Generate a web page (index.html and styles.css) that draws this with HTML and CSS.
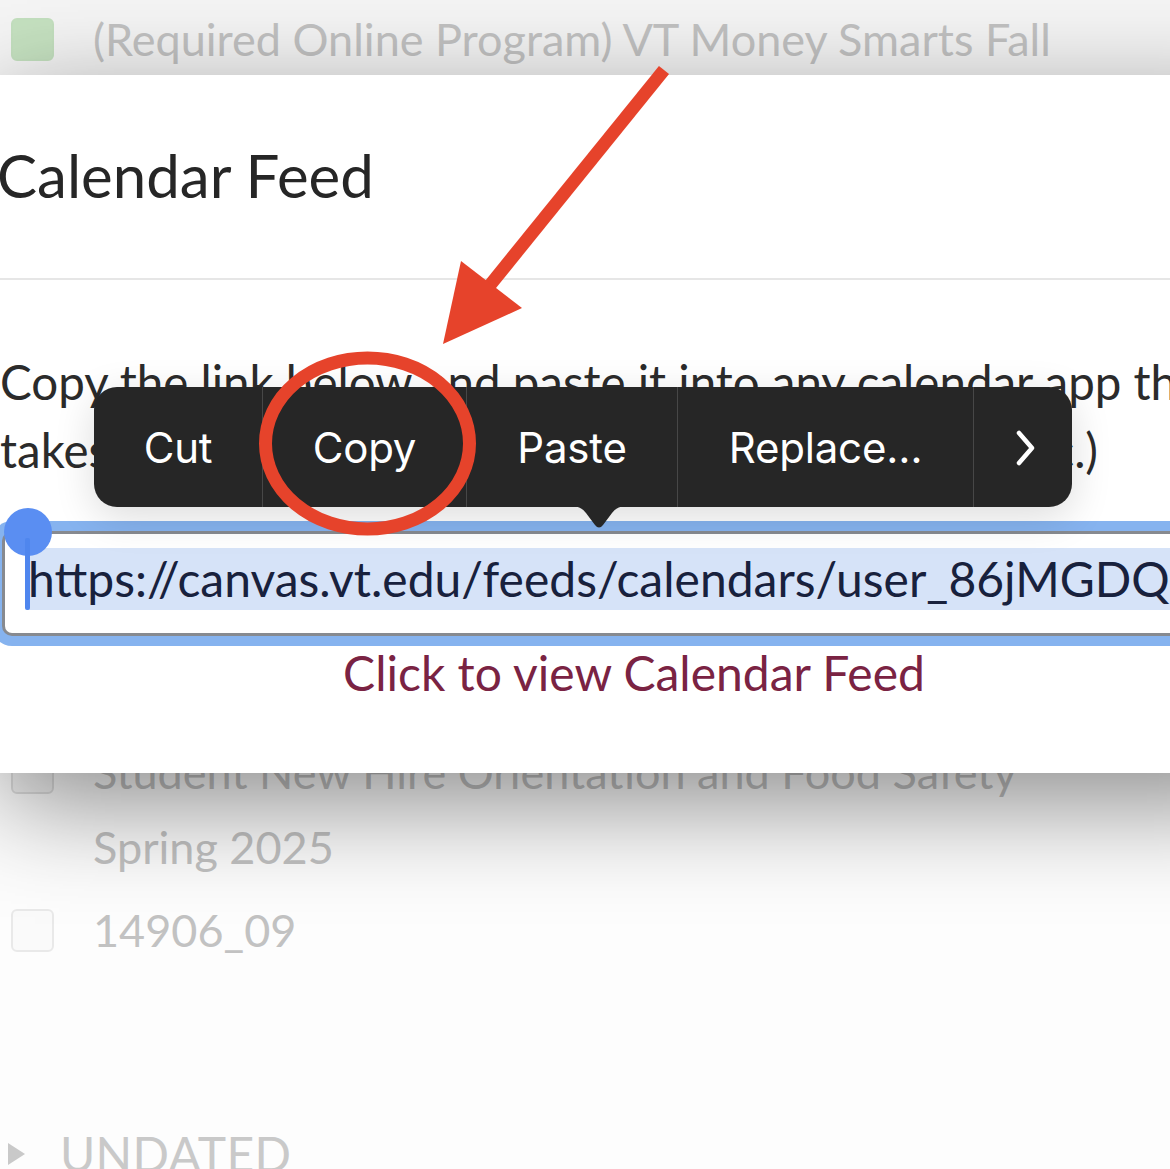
FILE: index.html
```html
<!DOCTYPE html>
<html lang="en">
<head>
<meta charset="utf-8">
<title>Calendar Feed</title>
<link rel="stylesheet" href="styles.css">
</head>
<body>
<div class="page">
  <ul class="todo-list">
    <li class="todo todo-top">
      <span class="check check-green"></span>
      <span class="todo-text">(Required Online Program) VT Money Smarts Fall</span>
    </li>
    <li class="todo todo-student">
      <span class="check check-dim"></span>
      <span class="todo-text">Student New Hire Orientation and Food Safety<br>Spring 2025</span>
    </li>
    <li class="todo todo-course">
      <span class="check"></span>
      <span class="todo-text">14906_09</span>
    </li>
  </ul>
  <div class="section-head">
    <span class="caret-right"></span>
    <span class="section-title">UNDATED</span>
  </div>

  <div class="modal">
    <div class="modal-header">
      <h1 class="modal-title">Calendar Feed</h1>
    </div>
    <div class="modal-body">
      <p class="modal-text">Copy the link below and paste it into any calendar app that takes iCal feeds (Google Calendar, iCal, Outlook, etc.)</p>
      <div class="feed-input">
        <div class="feed-sel">https://canvas.vt.edu/feeds/calendars/user_86jMGDQ6rLwH2kPzT9xYbNfV3cQe.ics</div>
      </div>
      <a class="feed-link" href="#">Click to view Calendar Feed</a>
    </div>
  </div>

  <div class="sel-handle">
    <span class="handle-dot"></span>
    <span class="handle-bar"></span>
  </div>

  <div class="edit-menu">
    <div class="menu-item item-cut">Cut</div>
    <div class="menu-item item-copy">Copy</div>
    <div class="menu-item item-paste">Paste</div>
    <div class="menu-item item-replace">Replace…</div>
    <div class="menu-item item-more">
      <svg width="20" height="36" viewBox="0 0 20 36"><path d="M3 3 L16 18 L3 33" fill="none" stroke="#fff" stroke-width="4.5" stroke-linecap="round" stroke-linejoin="round"/></svg>
    </div>
    <svg class="menu-pointer" width="58" height="23" viewBox="0 0 58 23"><path d="M0 0 H58 C50 0 46 2 42 7 L33 19 Q29 24 25 19 L16 7 C12 2 8 0 0 0 Z" fill="#262626"/></svg>
  </div>

  <svg class="annotation" width="1170" height="1169" viewBox="0 0 1170 1169">
    <line x1="664" y1="70" x2="482" y2="295" stroke="#e6432b" stroke-width="13"/>
    <polygon points="443,344 461,261 522,308" fill="#e6432b"/>
    <ellipse cx="367.5" cy="443.5" rx="102" ry="85.5" fill="none" stroke="#e6432b" stroke-width="13"/>
  </svg>
</div>
</body>
</html>
```

FILE: styles.css
```css
* { box-sizing: border-box; }
html, body {
  margin: 0;
  padding: 0;
  background: #ffffff;
}
body {
  width: 1170px;
  height: 1169px;
  overflow: hidden;
  font-family: "Lato", "Liberation Sans", sans-serif;
}
.page {
  position: relative;
  width: 1170px;
  height: 1169px;
  overflow: hidden;
  background: #fdfdfd;
}

/* background to-do list */
.todo-list {
  list-style: none;
  margin: 0;
  padding: 0;
}
.todo {
  display: flex;
  align-items: flex-start;
  padding-left: 11px;
  font-size: 45px;
  line-height: 75px;
  color: #c2c2c2;
}
.todo-top {
  padding-top: 2px;
  height: 735px;
  background: #f5f5f5;
}
.todo-course {
  margin-top: 8px;
}
.check {
  flex: none;
  width: 43px;
  height: 43px;
  margin-top: 16px;
  margin-right: 39px;
  border: 2px solid #e9e9e9;
  border-radius: 6px;
  background: #fafafa;
}
.check-green {
  border-color: #c4e0bf;
  background: #c6e2c1;
}
.check-dim {
  border-color: #dedede;
  background: #f2f2f2;
}
.todo-text {
  white-space: nowrap;
}
.section-head {
  display: flex;
  align-items: center;
  margin-top: 156px;
  padding-left: 8px;
  height: 60px;
}
.caret-right {
  width: 0;
  height: 0;
  border-top: 11px solid transparent;
  border-bottom: 11px solid transparent;
  border-left: 17px solid #c9c9c9;
  margin-right: 35px;
}
.section-title {
  font-size: 48px;
  line-height: 60px;
  color: #c9c9c9;
  letter-spacing: 0.3px;
}

/* modal */
.modal {
  position: absolute;
  top: 75px;
  left: 0;
  width: 1268px;
  height: 698px;
  background: #ffffff;
  box-shadow: 0 30px 100px rgba(0, 0, 0, 0.45);
  z-index: 2;
}
.modal-header {
  padding: 64px 0 67px;
  border-bottom: 2px solid #e6e6e6;
}
.modal-title {
  margin: 0 0 0 -3px;
  font-size: 60px;
  line-height: 72px;
  font-weight: 400;
  color: #262626;
}
.modal-body {
  padding-top: 68px;
  display: flex;
  flex-direction: column;
}
.modal-text {
  margin: 0;
  font-size: 47.5px;
  line-height: 68px;
  color: #2b2b2b;
}
.feed-input {
  margin: 47px 0 0 2px;
  height: 105px;
  border: 3px solid #878a90;
  border-right: none;
  border-radius: 10px 0 0 10px;
  background: #ffffff;
  box-shadow: 0 0 0 10px #86b3ef;
  padding: 14px 0 0 23px;
  overflow: hidden;
}
.feed-sel {
  height: 62px;
  background: #d6e3f8;
  font-size: 48px;
  line-height: 62px;
  color: #18213d;
  white-space: nowrap;
}
.feed-link {
  align-self: center;
  margin-top: 8px;
  font-size: 48px;
  line-height: 58px;
  color: #7a2343;
  text-decoration: none;
}

/* selection handle */
.sel-handle {
  position: absolute;
  left: 4px;
  top: 508px;
  width: 48px;
  height: 103px;
  z-index: 3;
}
.handle-dot {
  position: absolute;
  left: 0;
  top: 0;
  width: 48px;
  height: 48px;
  border-radius: 50%;
  background: #5a8ef2;
}
.handle-bar {
  position: absolute;
  left: 21px;
  top: 30px;
  width: 5px;
  height: 72px;
  border-radius: 2px;
  background: #4f86ee;
}

/* edit menu */
.edit-menu {
  position: absolute;
  left: 94px;
  top: 387px;
  width: 978px;
  height: 120px;
  display: flex;
  background: #262626;
  border-radius: 23px;
  box-shadow: 0 10px 40px rgba(0, 0, 0, 0.14);
  z-index: 4;
  font-family: "Inter", "Roboto", "Liberation Sans", sans-serif;
}
.menu-item {
  display: flex;
  align-items: center;
  justify-content: center;
  height: 100%;
  font-size: 42px;
  color: #ffffff;
  border-right: 1px solid #474747;
  letter-spacing: -0.2px;
}
.item-cut { width: 169px; }
.item-copy { width: 204px; }
.item-paste { width: 211px; }
.item-replace { width: 296px; }
.item-more { flex: 1; border-right: none; padding: 2px 0 0 6px; }
.menu-pointer {
  position: absolute;
  left: 476px;
  top: 119px;
}

/* red annotation */
.annotation {
  position: absolute;
  left: 0;
  top: 0;
  z-index: 5;
  pointer-events: none;
}
```
